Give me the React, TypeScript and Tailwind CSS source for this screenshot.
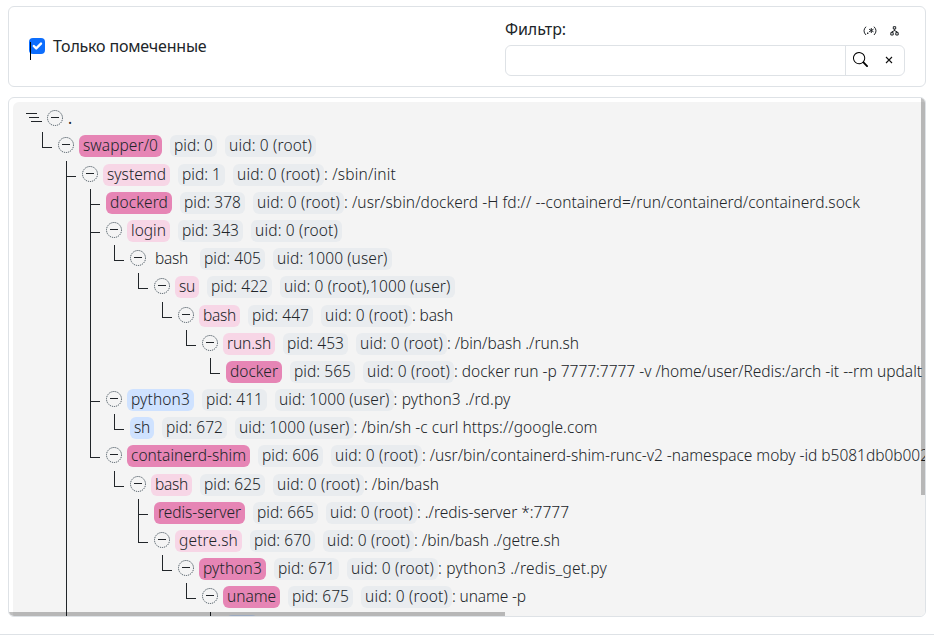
import { useLayoutEffect, useRef, useState } from 'react';

type Tone = 'hot' | 'warm' | 'cool' | 'none';

interface Proc {
  guides: string;
  leaf?: boolean;
  name: string;
  nameWidth: number;
  tone: Tone;
  pid: number;
  uid: string;
  uidWidth: number;
  cmd?: string;
  cmdWidth?: number;
}

const ROOT = '0 (root)';
const USER = '1000 (user)';

// Guide letters: "I" passes through, "T" branches, "L" ends a branch, "." is empty.
const processes: Proc[] = [
  { guides: 'L', name: 'swapper/0', nameWidth: 83, tone: 'hot', pid: 0, uid: ROOT, uidWidth: 91 },
  { guides: '.T', name: 'systemd', nameWidth: 67, tone: 'warm', pid: 1, uid: ROOT, uidWidth: 91, cmd: '/sbin/init', cmdWidth: 72 },
  { guides: '.IT', leaf: true, name: 'dockerd', nameWidth: 66, tone: 'hot', pid: 378, uid: ROOT, uidWidth: 91, cmd: '/usr/sbin/dockerd -H fd:// --containerd=/run/containerd/containerd.sock', cmdWidth: 516 },
  { guides: '.IT', name: 'login', nameWidth: 43, tone: 'warm', pid: 343, uid: ROOT, uidWidth: 91 },
  { guides: '.IIL', name: 'bash', nameWidth: 41, tone: 'none', pid: 405, uid: USER, uidWidth: 118.5 },
  { guides: '.II.L', name: 'su', nameWidth: 24, tone: 'warm', pid: 422, uid: '0 (root),1000 (user)', uidWidth: 174.5 },
  { guides: '.II..L', name: 'bash', nameWidth: 41, tone: 'warm', pid: 447, uid: ROOT, uidWidth: 91, cmd: 'bash', cmdWidth: 41 },
  { guides: '.II...L', name: 'run.sh', nameWidth: 52, tone: 'warm', pid: 453, uid: ROOT, uidWidth: 91, cmd: '/bin/bash ./run.sh', cmdWidth: 132 },
  { guides: '.II....L', leaf: true, name: 'docker', nameWidth: 56, tone: 'hot', pid: 565, uid: ROOT, uidWidth: 91, cmd: 'docker run -p 7777:7777 -v /home/user/Redis:/arch -it --rm updalt', cmdWidth: 468 },
  { guides: '.IT', name: 'python3', nameWidth: 67, tone: 'cool', pid: 411, uid: USER, uidWidth: 118.5, cmd: 'python3 ./rd.py', cmdWidth: 117 },
  { guides: '.IIL', leaf: true, name: 'sh', nameWidth: 24, tone: 'cool', pid: 672, uid: USER, uidWidth: 118.5, cmd: '/bin/sh -c curl https://google.com', cmdWidth: 244 },
  { guides: '.IL', name: 'containerd-shim', nameWidth: 123, tone: 'hot', pid: 606, uid: ROOT, uidWidth: 91, cmd: '/usr/bin/containerd-shim-runc-v2 -namespace moby -id b5081db0b002', cmdWidth: 507 },
  { guides: '.I.L', name: 'bash', nameWidth: 41, tone: 'warm', pid: 625, uid: ROOT, uidWidth: 91, cmd: '/bin/bash', cmdWidth: 75 },
  { guides: '.I..T', leaf: true, name: 'redis-server', nameWidth: 91, tone: 'hot', pid: 665, uid: ROOT, uidWidth: 91, cmd: './redis-server *:7777', cmdWidth: 152 },
  { guides: '.I..L', name: 'getre.sh', nameWidth: 67, tone: 'warm', pid: 670, uid: ROOT, uidWidth: 91, cmd: '/bin/bash ./getre.sh', cmdWidth: 146 },
  { guides: '.I...L', name: 'python3', nameWidth: 67, tone: 'hot', pid: 671, uid: ROOT, uidWidth: 91, cmd: 'python3 ./redis_get.py', cmdWidth: 169 },
  { guides: '.I....L', name: 'uname', nameWidth: 57, tone: 'hot', pid: 675, uid: ROOT, uidWidth: 91, cmd: 'uname -p', cmdWidth: 74 },
];

const tones: Record<Tone, string> = {
  hot: 'bg-[#e685b5]',
  warm: 'bg-[#f7d6e6]',
  cool: 'bg-[#cfe2ff]',
  none: '',
};

// Tracks the letters so that the text fills the given width.
function Fit({ text, width }: { text: string; width: number }) {
  const ref = useRef<HTMLSpanElement>(null);
  const [spacing, setSpacing] = useState(0);
  useLayoutEffect(() => {
    const natural = ref.current!.getBoundingClientRect().width;
    setSpacing((width - natural) / text.length);
  }, [text, width]);
  return (
    <span className="block whitespace-pre" style={{ width }}>
      <span ref={ref} className="inline-block" style={{ letterSpacing: spacing }}>
        {text}
      </span>
    </span>
  );
}

function Badge({ text, width, className }: { text: string; width: number; className: string }) {
  return (
    <span className={`mr-2 flex h-[22px] shrink-0 items-start rounded-md px-1 leading-[20px] ${className}`} style={{ width }}>
      <Fit text={text} width={width - 8} />
    </span>
  );
}

function Guide({ kind }: { kind: string }) {
  return (
    <span className="flex h-full w-6 shrink-0 flex-col">
      <span className={`h-[15px] w-px shrink-0 ${kind === '.' ? '' : 'bg-[#212529]'}`} />
      <span className={`h-px ${kind === 'T' || kind === 'L' ? 'w-2.5 bg-[#212529]' : kind === 'I' ? 'w-px bg-[#212529]' : ''}`} />
      <span className={`w-px grow ${kind === 'T' || kind === 'I' ? 'bg-[#212529]' : ''}`} />
    </span>
  );
}

function Toggle() {
  return (
    <svg className="h-4 w-4 shrink-0" viewBox="0 0 16 16" fill="none">
      <circle cx="8" cy="8" r="7.5" stroke="#42505a" strokeWidth="1" strokeDasharray="1.2 0.9" />
      <path d="M4 7.5h8" stroke="#212529" />
    </svg>
  );
}

function Row({ p }: { p: Proc }) {
  return (
    <div className="flex h-[28.1875px]">
      {[...p.guides].map((g, i) => (
        <Guide key={i} kind={g} />
      ))}
      <div className="-ml-2 flex items-start pt-[3px]">
        {!p.leaf && (
          <span className="mr-[5px] flex pt-[2px]">
            <Toggle />
          </span>
        )}
        <Badge text={p.name} width={p.nameWidth} className={tones[p.tone]} />
        <Badge text={`pid: ${p.pid}`} width={p.pid > 9 ? 65 : 47} className="bg-[#e9ecef]" />
        <Badge text={`uid: ${p.uid}`} width={p.uidWidth} className="bg-[#e9ecef]" />
        {p.cmd && (
          <span className="-ml-2 leading-[20px]">
            <Fit text={`: ${p.cmd}`} width={p.cmdWidth!} />
          </span>
        )}
      </div>
    </div>
  );
}

export default function App() {
  return (
    <div className="flex h-[635px] w-[934px] flex-col overflow-hidden border-b border-[#dee2e6] bg-white pt-1.5 pl-2 font-['Noto_Sans',sans-serif] text-base text-[#212529]">
      <section className="flex h-[81px] w-[918px] shrink-0 rounded-md border border-[#dee2e6] pl-5">
        <label className="relative flex w-[476px] items-center">
          <span className="flex h-4 w-4 -translate-y-px items-center justify-center rounded bg-[#0d6efd]">
            <svg className="h-4 w-4" viewBox="0 0 20 20" fill="none" stroke="#fff" strokeWidth="3" strokeLinecap="round" strokeLinejoin="round">
              <path d="m6 10 3 3 6-6" />
            </svg>
          </span>
          <span className="absolute top-[35px] left-px h-[18px] w-px bg-black" />
          <span className="ml-2 -translate-y-px">
            <Fit text="Только помеченные" width={153.5} />
          </span>
        </label>
        <div className="w-[400px]">
          <div className="flex h-[38px] items-center justify-between pt-1.5">
            <Fit text="Фильтр:" width={61} />
            <div className="flex items-center gap-[13px] pt-[3px] pr-[6px]">
              <svg className="h-2.5 w-[14px]" viewBox="0 0 14 10" fill="none" stroke="#212529" strokeWidth="1">
                <path d="M3 .7Q-1 4.8 3 9M11 .7Q15 4.8 11 9M8.3 2v5M6.1 3.2l4.4 2.6M10.5 3.2 6.1 5.8" />
                <path d="M4 6.5h1.4v1.4H4z" fill="#212529" stroke="none" />
              </svg>
              <svg className="h-2.5 w-[9px]" viewBox="0 0 9 10" fill="none" stroke="#212529" strokeWidth="1">
                <path d="M3.3 .7h2.4v2.3H3.3zM4.5 3.2v1.6M1.5 6 4.5 4.6 7.5 6" />
                <path d="M.8 6.6h2.4v2.4H.8zM5.8 6.6h2.4v2.4H5.8z" />
              </svg>
            </div>
          </div>
          <div className="flex h-[31px] rounded-md border border-[#dee2e6]">
            <div className="w-[339px]" />
            <div className="flex grow items-center border-l border-[#dee2e6] pl-[7px]">
              <svg className="h-[15px] w-[15px] -translate-y-px" viewBox="0 0 16 16" fill="#000">
                <path d="M11.742 10.344a6.5 6.5 0 1 0-1.397 1.398h-.001q.044.06.098.115l3.85 3.85a1 1 0 0 0 1.415-1.414l-3.85-3.85a1 1 0 0 0-.115-.1zM12 6.5a5.5 5.5 0 1 1-11 0 5.5 5.5 0 0 1 11 0" />
              </svg>
              <svg className="ml-[17px] h-2 w-2 -translate-y-px" viewBox="0 0 8 8" fill="none" stroke="#111" strokeWidth="1.1">
                <path d="m1 1 6 6M7 1 1 7" />
              </svg>
            </div>
          </div>
        </div>
      </section>

      <section className="relative mt-2.5 h-[520px] w-[918px] shrink-0 overflow-hidden rounded-md border border-[#dee2e6]">
        <div className="mt-1 ml-1 h-[515px] overflow-hidden rounded-tl-md bg-[#f4f4f4] text-[15.5px] font-[350]">
          <div className="flex h-[30.4px] items-center pt-0.5 pl-[13px]">
            <svg className="h-3 w-4" viewBox="0 0 16 12" stroke="#212529">
              <path d="M0 1.5h11M3 5.5h10M5 9.5h11" />
            </svg>
            <span className="mr-1 ml-[5px] flex">
              <Toggle />
            </span>
            <span className="ml-px leading-[22px] font-normal">.</span>
          </div>
          <div className="pl-[29px]">
            {processes.map((p) => (
              <Row key={p.pid} p={p} />
            ))}
            <div className="flex h-[28.1875px]">
              {[...'.I.....T'].map((g, i) => (
                <Guide key={i} kind={g} />
              ))}
              <span className="mt-[3px] -ml-2 h-[22px] w-8 rounded-md bg-[#cfe2ff]" />
            </div>
          </div>
        </div>
        <div className="absolute top-0 right-0 h-[397px] w-1 bg-black/25" />
        <div className="absolute bottom-0 left-0 h-1 w-[496px] bg-black/25" />
      </section>
    </div>
  );
}
